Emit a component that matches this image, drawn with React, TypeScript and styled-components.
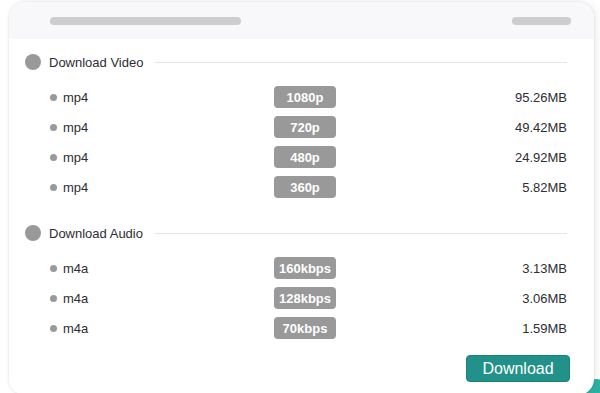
import React from "react";
import styled, { createGlobalStyle } from "styled-components";

const Global = createGlobalStyle`
  html, body { margin: 0; padding: 0; background: #ffffff; overflow: hidden; }
  body { font-family: "Liberation Sans", Arial, sans-serif; }
`;

const Page = styled.div`
  position: relative;
  width: 600px;
  height: 393px;
  overflow: hidden;
  padding: 2px 6px 0 9px;
  box-sizing: border-box;
`;

const Bubble = styled.div`
  position: absolute;
  right: -16px;
  bottom: -26px;
  width: 40px;
  height: 40px;
  border-radius: 50%;
  background: #2bb3a3;
`;

const Card = styled.div`
  position: relative;
  z-index: 1;
  height: 393px;
  background: #fff;
  border-radius: 16px;
  box-shadow: 0 0 3px rgba(0, 0, 0, 0.12), 3px 0 8px rgba(0, 0, 0, 0.06);
  overflow: hidden;
  display: flex;
  flex-direction: column;
`;

const Header = styled.div`
  height: 37px;
  background: #f8f8fa;
  display: flex;
  align-items: center;
  justify-content: space-between;
  padding: 0 23px 0 41px;
`;

const Skeleton = styled.div<{ $w: number }>`
  width: ${(p) => p.$w}px;
  height: 8px;
  border-radius: 4px;
  background: #cdcdcd;
`;

const Body = styled.div`
  padding: 13px 27px 0 16px;
  display: flex;
  flex-direction: column;
`;

const Section = styled.div<{ $gap: number }>`
  margin-top: ${(p) => p.$gap}px;
`;

const TitleRow = styled.div`
  height: 20px;
  display: flex;
  align-items: center;
  margin-bottom: 10px;
`;

const BigDot = styled.span`
  width: 16px;
  height: 16px;
  border-radius: 50%;
  background: #999;
  flex: none;
`;

const Title = styled.span`
  font-size: 13px;
  color: #2d2d33;
  margin-left: 8px;
  white-space: nowrap;
`;

const Rule = styled.span`
  flex: 1;
  height: 1px;
  background: #e6e6e6;
  margin-left: 11px;
`;

const Row = styled.div`
  height: 30px;
  display: grid;
  grid-template-columns: 224px 62px 1fr;
  align-items: center;
  padding-left: 25px;
`;

const Format = styled.div`
  display: flex;
  align-items: center;
  font-size: 13px;
  color: #2d2d33;
`;

const SmallDot = styled.span`
  width: 7px;
  height: 7px;
  border-radius: 50%;
  background: #999;
  margin-right: 6px;
`;

const Badge = styled.span`
  height: 22px;
  border-radius: 4px;
  background: #999;
  color: #fff;
  font-weight: bold;
  font-size: 13px;
  display: flex;
  align-items: center;
  justify-content: center;
`;

const Size = styled.div`
  text-align: right;
  font-size: 13px;
  color: #2d2d33;
`;

const Footer = styled.div`
  display: flex;
  justify-content: flex-end;
  margin-top: 12px;
  padding-right: 24px;
`;

const Button = styled.button`
  width: 104px;
  height: 27px;
  border: 1px solid #1b8279;
  border-radius: 4px;
  background: #21918a;
  color: #fff;
  font-family: "Liberation Sans", Arial, sans-serif;
  font-size: 16px;
  padding: 0;
  cursor: pointer;
`;

type Item = { fmt: string; q: string; size: string };

const video: Item[] = [
  { fmt: "mp4", q: "1080p", size: "95.26MB" },
  { fmt: "mp4", q: "720p", size: "49.42MB" },
  { fmt: "mp4", q: "480p", size: "24.92MB" },
  { fmt: "mp4", q: "360p", size: "5.82MB" },
];

const audio: Item[] = [
  { fmt: "m4a", q: "160kbps", size: "3.13MB" },
  { fmt: "m4a", q: "128kbps", size: "3.06MB" },
  { fmt: "m4a", q: "70kbps", size: "1.59MB" },
];

function Group({ title, items, gap }: { title: string; items: Item[]; gap: number }) {
  return (
    <Section $gap={gap}>
      <TitleRow>
        <BigDot />
        <Title>{title}</Title>
        <Rule />
      </TitleRow>
      {items.map((it, i) => (
        <Row key={i}>
          <Format>
            <SmallDot />
            {it.fmt}
          </Format>
          <Badge>{it.q}</Badge>
          <Size>{it.size}</Size>
        </Row>
      ))}
    </Section>
  );
}

export default function App() {
  return (
    <Page>
      <Global />
      <Bubble />
      <Card>
        <Header>
          <Skeleton $w={191} />
          <Skeleton $w={59} />
        </Header>
        <Body>
          <Group title="Download Video" items={video} gap={0} />
          <Group title="Download Audio" items={audio} gap={21} />
        </Body>
        <Footer>
          <Button>Download</Button>
        </Footer>
      </Card>
    </Page>
  );
}
